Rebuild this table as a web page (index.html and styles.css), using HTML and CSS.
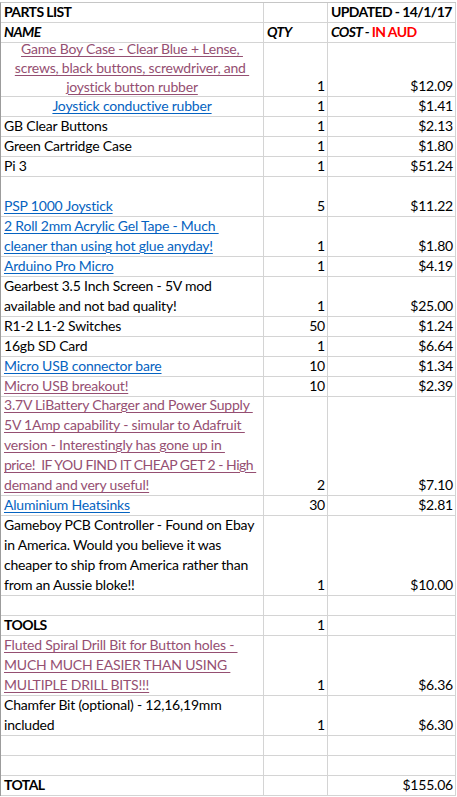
FILE: index.html
```html
<!DOCTYPE html>
<html>
<head>
<meta charset="utf-8">
<link rel="stylesheet" href="styles.css">
</head>
<body>
<div class="sheet">
  <div class="c"><span class="b">PARTS LIST</span></div>
  <div class="c"></div>
  <div class="c"><span class="b">UPDATED - 14/1/17</span></div>

  <div class="c"><span class="bi">NAME</span></div>
  <div class="c"><span class="bi">QTY</span></div>
  <div class="c"><span class="bi">COST - </span><span class="b red">&nbsp;IN AUD</span></div>

  <div class="c center tight"><span class="v">Game Boy Case - Clear Blue + Lense,&nbsp;<br>screws, black buttons, screwdriver, and&nbsp;<br>joystick button rubber</span></div>
  <div class="c r">1</div>
  <div class="c r">$12.09</div>

  <div class="c center"><span class="l">Joystick conductive rubber</span></div>
  <div class="c r">1</div>
  <div class="c r">$1.41</div>

  <div class="c">GB Clear Buttons</div>
  <div class="c r">1</div>
  <div class="c r">$2.13</div>

  <div class="c">Green Cartridge Case</div>
  <div class="c r">1</div>
  <div class="c r">$1.80</div>

  <div class="c">Pi 3</div>
  <div class="c r">1</div>
  <div class="c r">$51.24</div>

  <div class="c"><span class="l">PSP 1000 Joystick</span></div>
  <div class="c r">5</div>
  <div class="c r">$11.22</div>

  <div class="c"><span class="l">2 Roll 2mm Acrylic Gel Tape - Much&nbsp;<br>cleaner than using hot glue anyday!</span></div>
  <div class="c r">1</div>
  <div class="c r">$1.80</div>

  <div class="c"><span class="l">Arduino Pro Micro</span></div>
  <div class="c r">1</div>
  <div class="c r">$4.19</div>

  <div class="c"><span>Gearbest 3.5 Inch Screen - 5V mod<br>available and not bad quality!</span></div>
  <div class="c r">1</div>
  <div class="c r">$25.00</div>

  <div class="c">R1-2 L1-2 Switches</div>
  <div class="c r">50</div>
  <div class="c r">$1.24</div>

  <div class="c">16gb SD Card</div>
  <div class="c r">1</div>
  <div class="c r">$6.64</div>

  <div class="c"><span class="l">Micro USB connector bare</span></div>
  <div class="c r">10</div>
  <div class="c r">$1.34</div>

  <div class="c"><span class="v">Micro USB breakout!</span></div>
  <div class="c r">10</div>
  <div class="c r">$2.39</div>

  <div class="c"><span class="v">3.7V LiBattery Charger and Power Supply&nbsp;<br>5V 1Amp capability - simular to Adafruit&nbsp;<br>version - Interestingly has gone up in&nbsp;<br><span class="snug">price!&nbsp; IF YOU FIND IT CHEAP GET 2 - High&nbsp;</span><br>demand and very useful!</span></div>
  <div class="c r">2</div>
  <div class="c r">$7.10</div>

  <div class="c"><span class="l">Aluminium Heatsinks</span></div>
  <div class="c r">30</div>
  <div class="c r">$2.81</div>

  <div class="c"><span>Gameboy PCB Controller - Found on Ebay<br>in America. Would you believe it was<br>cheaper to ship from America rather than<br>from an Aussie bloke!!</span></div>
  <div class="c r">1</div>
  <div class="c r">$10.00</div>

  <div class="c"></div>
  <div class="c"></div>
  <div class="c"></div>

  <div class="c"><span class="b">TOOLS</span></div>
  <div class="c r">1</div>
  <div class="c"></div>

  <div class="c"><span class="v">Fluted Spiral Drill Bit for Button holes -&nbsp;<br>MUCH MUCH EASIER THAN USING&nbsp;<br>MULTIPLE DRILL BITS!!!</span></div>
  <div class="c r">1</div>
  <div class="c r">$6.36</div>

  <div class="c"><span>Chamfer Bit (optional) - 12,16,19mm<br>included</span></div>
  <div class="c r">1</div>
  <div class="c r">$6.30</div>

  <div class="c"></div>
  <div class="c"></div>
  <div class="c"></div>

  <div class="c"></div>
  <div class="c"></div>
  <div class="c"></div>

  <div class="c"><span class="b">TOTAL</span></div>
  <div class="c"></div>
  <div class="c r">$155.06</div>
</div>
</body>
</html>
```

FILE: styles.css
```css
html, body {
  margin: 0;
  padding: 0;
  background: #ffffff;
}

body {
  font-family: Lato, "Liberation Sans", sans-serif;
  font-size: 14px;
  letter-spacing: -0.2px;
  color: #000000;
}

.sheet {
  margin-top: 2px;
  display: grid;
  grid-template-columns: 263px 64px 128px;
  grid-template-rows: 20px 20px 54px 20px 20px 20px 20px 40px 40px 20px 40px 20px 20px 20px 20px 99px 20px 80px 20px 20px 60px 40px 20px 20px 20px;
  width: 455px;
  border-top: 1px solid #c6c6c6;
  border-left: 1px solid #9c9c9c;
}

.c {
  box-sizing: border-box;
  border-right: 1px solid #d4d4d4;
  border-bottom: 1px solid #d4d4d4;
  display: flex;
  align-items: flex-end;
  overflow: hidden;
  padding: 0 3px;
  line-height: 20px;
  white-space: nowrap;
}

.c.tight {
  line-height: 19px;
}

.c.r {
  justify-content: flex-end;
  padding-right: 2px;
}

.c.center {
  justify-content: center;
  text-align: center;
}

.snug {
  letter-spacing: -0.5px;
}

.b {
  font-weight: bold;
  letter-spacing: -0.6px;
}

.bi {
  font-weight: bold;
  font-style: italic;
  letter-spacing: -0.6px;
}

.red {
  color: #ff0000;
}

.l {
  color: #0563c1;
  text-decoration: underline;
  text-underline-offset: 2px;
}

.v {
  color: #954f72;
  text-decoration: underline;
  text-underline-offset: 2px;
}
```
